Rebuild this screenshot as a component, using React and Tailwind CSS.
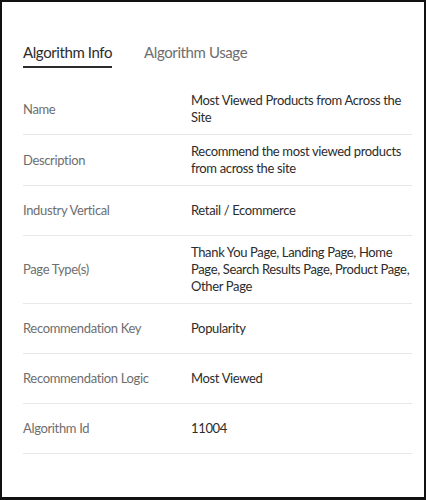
export default function App() {
  const rows = [
    ["Name", "Most Viewed Products from Across the Site"],
    ["Description", "Recommend the most viewed products from across the site"],
    ["Industry Vertical", "Retail / Ecommerce"],
    ["Page Type(s)", "Thank You Page, Landing Page, Home Page, Search Results Page, Product Page, Other Page"],
    ["Recommendation Key", "Popularity"],
    ["Recommendation Logic", "Most Viewed"],
    ["Algorithm Id", "11004"],
  ];
  return (
    <div
      className="w-[426px] h-[500px] bg-white border-2 border-b-[3px] border-[#111] box-border"
      style={{ fontFamily: "Lato, 'Liberation Sans', sans-serif" }}
    >
      <div className="pl-[21px] pr-[12px] pt-[40px]">
        <div className="flex gap-[32px]">
          <div className="flex flex-col">
            <span className="text-[15px] leading-[20px] tracking-[-0.4px] text-[#2c2c2c]">Algorithm Info</span>
            <span className="mt-[4px] h-[2px] bg-[#2c2c2c]"></span>
          </div>
          <div className="flex flex-col">
            <span className="text-[15px] leading-[20px] tracking-[-0.4px] text-[#6e6e6e]">Algorithm Usage</span>
          </div>
        </div>
        <div className="mt-[16px] w-[389px]">
          {rows.map(([k, v]) => (
            <div
              key={k}
              className="flex items-center min-h-[50px] py-2 border-b border-[#e8e8e8] text-[13px] leading-[17px] tracking-[-0.35px]"
            >
              <div className="w-[168px] shrink-0 text-[#6e6e6e]">{k}</div>
              <div className="flex-1 text-[#2c2c2c]">{v}</div>
            </div>
          ))}
        </div>
      </div>
    </div>
  );
}
